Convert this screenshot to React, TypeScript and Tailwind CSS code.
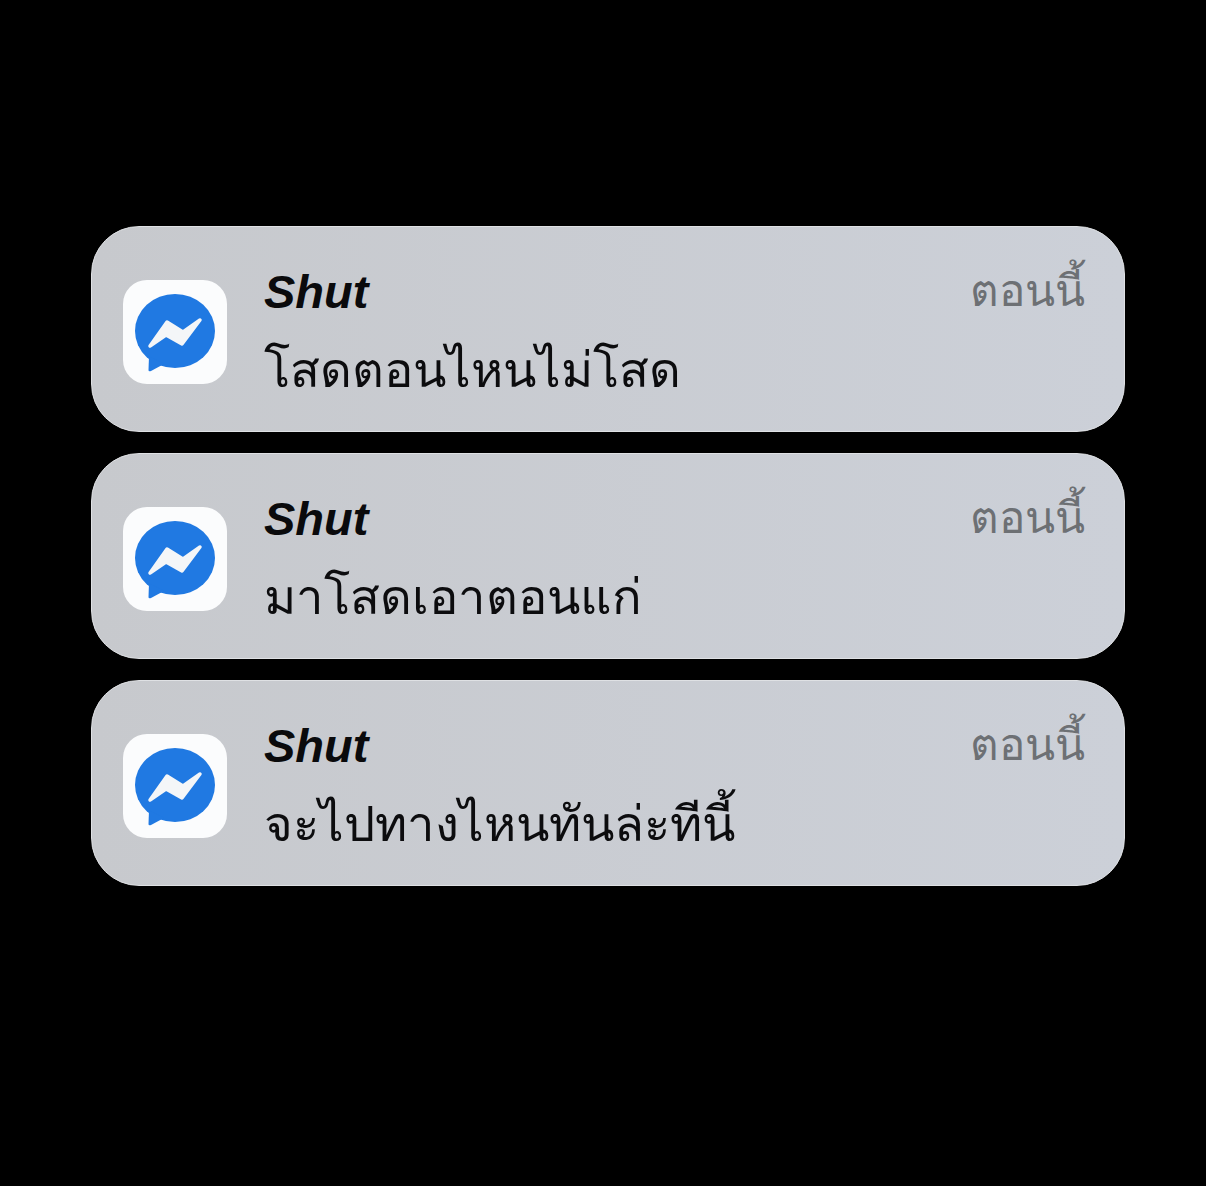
const notifications = [
  { sender: 'Shut', message: 'โสดตอนไหนไม่โสด', time: 'ตอนนี้' },
  { sender: 'Shut', message: 'มาโสดเอาตอนแก่', time: 'ตอนนี้' },
  { sender: 'Shut', message: 'จะไปทางไหนทันล่ะทีนี้', time: 'ตอนนี้' },
];

function MessengerIcon() {
  return (
    <div className="mt-[53.5px] flex h-[104px] w-[104px] shrink-0 items-center justify-center rounded-[24px] bg-[#fbfcfd]">
      <svg width="104" height="104" viewBox="0 0 104 104">
        <ellipse cx="52" cy="51" rx="40" ry="37" fill="#2079e2" />
        <path d="M26 76 L25.5 90 Q25.5 92 28 91 L41 84 Z" fill="#2079e2" />
        <path
          d="M27 66 L44 42 L60 52 L77 40 L59 64 L43 55 Z"
          fill="#f4f6f8"
          stroke="#f4f6f8"
          strokeWidth="3.5"
          strokeLinejoin="round"
        />
      </svg>
    </div>
  );
}

export default function App() {
  return (
    <div className="flex h-[1186px] w-full flex-col gap-[21px] bg-black pl-[91px] pr-[81px] pt-[225.5px] font-['Liberation_Sans','Noto_Sans',sans-serif]">
      {notifications.map((item) => (
        <div
          key={item.message}
          className="flex h-[206px] items-start gap-[37px] rounded-[48px] border border-[#dfe1e4] bg-gradient-to-r from-[#c7c9cd] to-[#ccd0d8] pl-[31px] pr-[39px]"
        >
          <MessengerIcon />
          <div className="flex flex-1 flex-col gap-[23px] pt-[38.5px]">
            <div className="flex items-center justify-between">
              <span className="text-[47px] font-bold italic leading-[54px] text-[#0a0a0c]">{item.sender}</span>
              <span className="-mt-[3px] text-[44px] leading-[54px] text-[#6d7074]">{item.time}</span>
            </div>
            <div className="text-[49px] leading-[56px] text-[#0c0c0e]">{item.message}</div>
          </div>
        </div>
      ))}
    </div>
  );
}
